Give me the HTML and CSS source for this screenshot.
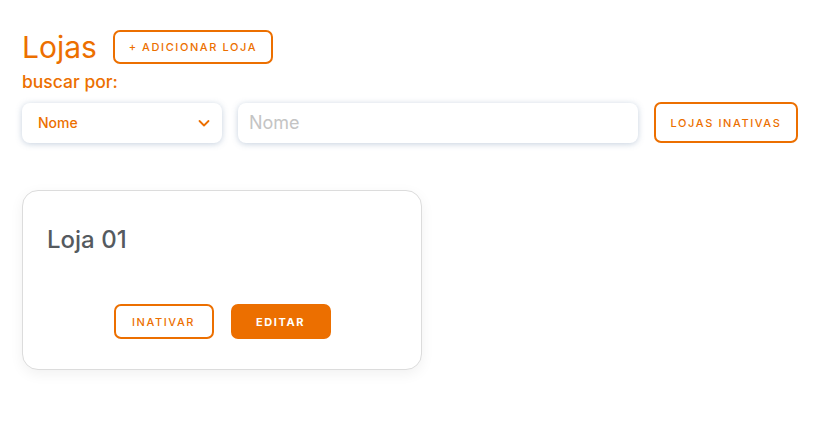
FILE: index.html
```html
<!DOCTYPE html>
<html lang="pt">
<head>
<meta charset="utf-8">
<link rel="stylesheet" href="styles.css">
</head>
<body>
<main class="page">
  <header class="header">
    <h1 class="title">Lojas</h1>
    <button class="btn btn-outline btn-add">+ Adicionar loja</button>
  </header>
  <label class="search-label">buscar por:</label>
  <div class="filters">
    <div class="select">
      <span>Nome</span>
      <svg class="chev" width="14" height="14" viewBox="0 0 14 14"><path d="M2.5 5 L7 9.5 L11.5 5" fill="none" stroke="#ec6f00" stroke-width="1.8" stroke-linecap="round" stroke-linejoin="round"/></svg>
    </div>
    <input class="input" type="text" placeholder="Nome">
    <button class="btn btn-outline btn-inativas">Lojas inativas</button>
  </div>
  <section class="card">
    <h2 class="card-title">Loja 01</h2>
    <div class="card-actions">
      <button class="btn btn-outline btn-card">Inativar</button>
      <button class="btn btn-fill btn-card">Editar</button>
    </div>
  </section>
</main>
</body>
</html>
```
FILE: styles.css
```css
* { box-sizing: border-box; }
body {
  margin: 0;
  background: #fff;
  font-family: Inter, "Noto Sans", sans-serif;
}
.page {
  padding: 30px 22px;
}
.header {
  display: flex;
  align-items: center;
  gap: 16px;
}
.title {
  margin: 0;
  font-size: 30px;
  line-height: 34px;
  font-weight: 400;
  color: #ec6f00;
}
.btn {
  font-family: Inter, "Noto Sans", sans-serif;
  text-transform: uppercase;
  letter-spacing: 1.6px;
  font-size: 11px;
  font-weight: 500;
  border-radius: 7px;
  cursor: pointer;
  padding: 0;
}
.btn-outline {
  background: #fff;
  border: 2px solid #ec6f00;
  color: #ec6f00;
}
.btn-fill {
  background: #ec6f00;
  border: 2px solid #ec6f00;
  color: #fff;
  font-weight: 700;
}
.btn-add {
  width: 160px;
  height: 34px;
}
.search-label {
  display: block;
  margin-top: 7px;
  font-size: 17.5px;
  line-height: 22px;
  font-weight: 500;
  color: #ec6f00;
}
.filters {
  display: flex;
  align-items: center;
  gap: 16px;
  margin-top: 9px;
}
.select {
  width: 200px;
  height: 40px;
  border-radius: 8px;
  background: #fff;
  box-shadow: 0 1px 6px rgba(90, 120, 160, 0.35);
  display: flex;
  align-items: center;
  justify-content: space-between;
  padding: 0 11px 0 16px;
  color: #ec6f00;
  font-size: 14px;
  font-weight: 500;
}
.input {
  width: 400px;
  height: 40px;
  border: none;
  border-radius: 8px;
  background: #fff;
  box-shadow: 0 1px 6px rgba(90, 120, 160, 0.35);
  padding: 0 11px;
  font-family: Inter, "Noto Sans", sans-serif;
  font-size: 18px;
  outline: none;
}
.input::placeholder { color: #c4c4c4; }
.btn-inativas {
  width: 144px;
  height: 41px;
}
.card {
  margin-top: 47px;
  width: 400px;
  height: 180px;
  border: 1px solid #dcdcdc;
  border-radius: 16px;
  background: #fff;
  box-shadow: 0 4px 14px rgba(0, 0, 0, 0.06);
  padding: 34px 24px 0;
  display: flex;
  flex-direction: column;
}
.card-title {
  margin: 0;
  font-size: 24px;
  line-height: 30px;
  font-weight: 500;
  color: #555a5f;
}
.card-actions {
  margin-top: auto;
  margin-bottom: 30px;
  display: flex;
  justify-content: center;
  gap: 17px;
}
.btn-card {
  width: 100px;
  height: 35px;
}
```
